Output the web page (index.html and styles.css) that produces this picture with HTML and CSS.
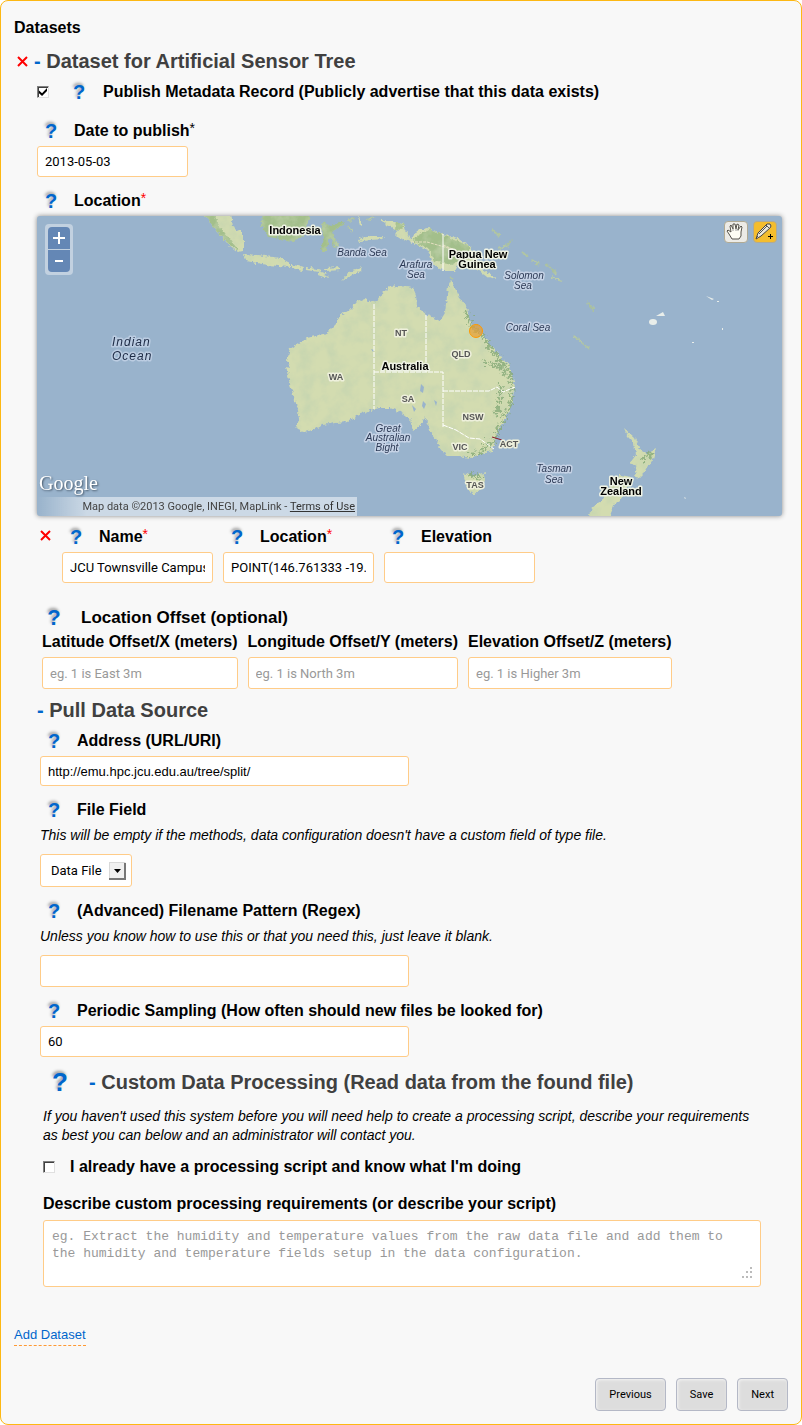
FILE: index.html
```html
<!DOCTYPE html>
<html lang="en">
<head>
<meta charset="utf-8">
<meta name="viewport" content="width=device-width, initial-scale=1">
<title>Datasets</title>
<link rel="stylesheet" href="styles.css">
</head>
<body>
<form class="panel">
  <h1 class="page-title">Datasets</h1>

  <section class="dataset">
    <div class="heading">
      <button type="button" class="remove" aria-label="Remove dataset"><svg viewBox="0 0 11 11"><path d="M1 1L10 10M10 1L1 10"/></svg></button>
      <h2><a href="#" class="toggle">-</a> Dataset for Artificial Sensor Tree</h2>
    </div>

    <div class="dataset-body">
      <div class="publish-row">
        <input type="checkbox" class="check" id="publish" checked>
        <button type="button" class="help">?</button>
        <label for="publish">Publish Metadata Record (Publicly advertise that this data exists)</label>
      </div>

      <div class="field date-field">
        <div class="label-row"><button type="button" class="help">?</button><label for="date">Date to publish<sup>*</sup></label></div>
        <input type="text" class="box short" id="date" value="2013-05-03">
      </div>

      <div class="field map-field">
        <div class="label-row"><button type="button" class="help">?</button><span class="label">Location<sup class="required">*</sup></span></div>
        <div class="map">
          <svg class="map-canvas" viewBox="37 216 745 300" preserveAspectRatio="xMidYMid slice" role="img" aria-label="Map of Australia">
            <defs>
              <filter id="terrain" x="37" y="206" width="745" height="320" filterUnits="userSpaceOnUse">
                <feTurbulence type="fractalNoise" baseFrequency="0.28" numOctaves="3" seed="4" result="fine"/>
                <feDisplacementMap in="SourceGraphic" in2="fine" scale="5" xChannelSelector="R" yChannelSelector="G" result="coast"/>
                <feTurbulence type="fractalNoise" baseFrequency="0.07" numOctaves="4" seed="9"/>
                <feColorMatrix values="0 0 0 0 .55  0 0 0 0 .66  0 0 0 0 .43  1.8 0 0 0 -.72"/>
                <feComposite in2="coast" operator="in" result="mottle"/>
                <feMerge><feMergeNode in="coast"/><feMergeNode in="mottle"/></feMerge>
              </filter>
              <filter id="forest" x="37" y="206" width="745" height="320" filterUnits="userSpaceOnUse">
                <feTurbulence type="fractalNoise" baseFrequency="0.3" numOctaves="3" seed="2" result="n"/>
                <feDisplacementMap in="SourceGraphic" in2="n" scale="12" xChannelSelector="R" yChannelSelector="G"/>
              </filter>
            </defs>
            <g class="land" filter="url(#terrain)">
              <path d="M451 281L457 290L461 301L465 303L468 312L470 322L474 330L483 335L489 344L497 352L502 360L508 364L513 377L515 387L513 395L510 410L503 422L497 432L494 445L492 451L478 455L470 458L460 456L450 456L441 451L438 442L431 434L428 423L425 417L421 424L413 431L410 420L405 415L398 411L390 408L380 408L370 410L358 415L347 422L335 423L322 425L313 430L303 432L296 427L299 420L298 410L295 400L290 385L288 375L286 367L291 368L287 360L290 349L307 338L327 333L337 323L340 315L350 310L357 302L365 299L373 303L378 300L383 292L390 287L398 286L413 288L416 295L417 307L427 315L440 321L445 313L447 297L448 287Z"/>
              <path d="M463 473Q475 478 485 473L483 484L475 495L468 490Z"/>
              <path d="M624 428L635 438L640 450L647 454L656 449L653 459L645 472L638 479L635 475L637 468L630 463L636 455L634 443L628 437Z"/>
              <path d="M620 475L632 477L623 497L615 503L609 518H588L592 508L602 500L613 480Z"/>
              <path d="M203 212H231L233 227L243 233V251L238 252L229 245L217 232Z"/>
              <path d="M243 254L257 255L280 258L290 263V267L267 265L247 261Z"/>
              <path d="M292 265L304 267L302 271L292 268ZM306 267L322 270L320 272L306 270ZM325 268L341 267L340 270L326 271ZM318 272L329 276L327 278L318 275ZM341 281L350 272L363 267L361 271L352 275Z"/>
              <path d="M380 219L393 222L403 223L405 230L411 239L417 231L428 228L443 234L460 240L470 246L474 260L482 269L497 279L487 277L477 269L460 262L455 271L443 271L432 264L428 250L413 243L399 238L395 234L398 230L386 225Z"/>
              <path d="M359 239L370 236L384 236L383 239L370 240L360 242ZM358 216L363 224L360 226Z"/>
            </g>
            <g class="jungle" filter="url(#terrain)">
              <path d="M261 212H311L303 237L293 241L268 237L262 226Z"/>
              <path d="M322 222L331 226L343 221L344 224L332 231L334 236L339 246L335 248L330 237L326 251L321 251L323 236Z"/>
              <path d="M203 212L217 232L230 245L240 252L232 242L221 228L212 212Z"/>
              <path d="M396 222L404 224L402 230L395 229ZM413 238L430 229L443 235L469 246L470 258L458 262L452 265L434 261L429 249L414 242Z"/>
            </g>
            <g class="islands" filter="url(#terrain)">
              <path d="M498 249L507 246L512 240M522 252L528 257M532 260L539 265M546 264L557 274M551 277L562 281M588 302L594 311M574 336L590 349M492 230L500 236M450 277L453 279M348 221L354 218M349 227L352 232M367 220L374 217"/>
            </g>
            <g class="forest" filter="url(#forest)">
              <path d="M466 311L471 325L482 335L491 349L506 366L512 383L510 405L501 423L493 445M484 362L498 366L506 376M501 385L499 407L494 417M470 454L482 452L490 441M470 475L481 478"/>
              <path d="M652 453L642 461"/>
            </g>
            <path class="ridge" d="M411 242L427 242L441 246L455 250M443 245L460 252"/>
            <g class="lakes">
              <path d="M421 384L424 387L423 393L420 391ZM412 405L416 409L414 412ZM423 401L426 404L424 409L422 406ZM434 400L437 402L436 406ZM371 349L374 350L373 352Z"/>
            </g>
            <g class="reefs">
              <ellipse cx="653" cy="322" rx="4" ry="3"/><path d="M656 316L663 312L665 316ZM706 296L714 299L712 300ZM717 301H719V302H717ZM692 342H694V343H692ZM722 328H723V330H722ZM684 497L686 498L685 499Z"/>
            </g>
            <path class="borders" d="M374 304V409M426 315V372M374 372H443V427M443 391H489L497 387L503 392L515 387M443 425L456 430L469 438L480 439L494 449"/>
            <path class="nation-border" d="M443 234V271"/>
            <path class="callout" d="M492 437L502 440"/>
            <circle class="marker" cx="476" cy="331" r="6.5"/>
            <g class="country">
              <text x="295" y="234">Indonesia</text>
              <text x="478" y="258">Papua New</text><text x="477" y="268">Guinea</text>
              <text x="405" y="370">Australia</text>
              <text x="621" y="485">New</text><text x="621" y="495">Zealand</text>
            </g>
            <g class="sea">
              <text x="362" y="256">Banda Sea</text>
              <text x="416" y="268">Arafura</text><text x="416" y="278">Sea</text>
              <text x="524" y="279">Solomon</text><text x="523" y="289">Sea</text>
              <text x="528" y="331">Coral Sea</text>
              <text x="388" y="432">Great</text><text x="388" y="441">Australian</text><text x="387" y="451">Bight</text>
              <text x="554" y="472">Tasman</text><text x="554" y="483">Sea</text>
            </g>
            <g class="ocean"><text x="112" y="346">Indian</text><text x="112" y="360">Ocean</text></g>
            <g class="state">
              <text x="401" y="336">NT</text><text x="461" y="357">QLD</text><text x="336" y="380">WA</text><text x="408" y="402">SA</text><text x="473" y="420">NSW</text><text x="460" y="450">VIC</text><text x="509" y="447">ACT</text><text x="475" y="488">TAS</text>
            </g>
          </svg>
          <div class="zoom"><button type="button" aria-label="Zoom in"><svg viewBox="0 0 22 22"><path d="M5 11H17M11 5V17"/></svg></button><button type="button" aria-label="Zoom out"><svg viewBox="0 0 22 22"><path d="M7 11H15"/></svg></button></div>
          <div class="tools">
            <button type="button" aria-label="Pan"><svg viewBox="0 0 20 18"><path class="hand" d="M6 16L3 11L1 8L2 7L5 9L4 3L5 2L7 6L7 1L9 1L10 6L11 1L13 2L12 7L15 3L16 4L15 9L15 13L13 16Z"/><path class="hand-line" d="M7 5V8M10 5V8M12 6V8"/></svg></button>
            <button type="button" class="active" aria-label="Draw point"><svg viewBox="0 0 20 18"><path class="pencil" d="M1 16L3 10L12 1L15 1L16 3L15 5L6 13Z"/><path class="pencil-line" d="M4 11L12 3M11 2L15 6M2 13L4 15"/><path class="plus" d="M13 13.500H18M15.500 11V16"/></svg></button>
          </div>
          <div class="attribution">
            <span class="logo">Google</span>
            <p>Map data ©2013 Google, INEGI, MapLink - <a href="#">Terms of Use</a></p>
          </div>
        </div>
      </div>

      <div class="point">
        <button type="button" class="remove" aria-label="Remove point"><svg viewBox="0 0 11 11"><path d="M1 1L10 10M10 1L1 10"/></svg></button>
        <div class="field"><div class="label-row"><button type="button" class="help">?</button><label for="name">Name<sup class="required">*</sup></label></div><input type="text" class="box short" id="name" value="JCU Townsville Campus"></div>
        <div class="field"><div class="label-row"><button type="button" class="help">?</button><label for="point">Location<sup class="required">*</sup></label></div><input type="text" class="box short" id="point" value="POINT(146.761333 -19.32)"></div>
        <div class="field"><div class="label-row"><button type="button" class="help">?</button><label for="elevation">Elevation</label></div><input type="text" class="box short" id="elevation"></div>
      </div>

      <div class="offsets">
        <h3 class="label-row"><button type="button" class="help medium">?</button>Location Offset (optional)</h3>
        <div class="offset-fields">
          <div class="field"><label for="lat">Latitude Offset/X (meters)</label><input type="text" class="box tall" id="lat" size="1" placeholder="eg. 1 is East 3m"></div>
          <div class="field"><label for="lon">Longitude Offset/Y (meters)</label><input type="text" class="box tall" id="lon" size="1" placeholder="eg. 1 is North 3m"></div>
          <div class="field"><label for="ele">Elevation Offset/Z (meters)</label><input type="text" class="box tall" id="ele" size="1" placeholder="eg. 1 is Higher 3m"></div>
        </div>
      </div>

      <section class="source">
        <h2><a href="#" class="toggle">-</a> Pull Data Source</h2>
        <div class="source-body">
          <div class="field address">
            <div class="label-row"><button type="button" class="help">?</button><label for="address">Address (URL/URI)</label></div>
            <input type="text" class="box long url" id="address" value="http://emu.hpc.jcu.edu.au/tree/split/">
          </div>
          <div class="field">
            <div class="label-row"><button type="button" class="help">?</button><label for="file">File Field</label></div>
            <p class="hint">This will be empty if the methods, data configuration doesn't have a custom field of type file.</p>
            <div class="select"><select id="file"><option>Data File</option></select><svg viewBox="0 0 17 18"><path class="face" d="M0 0H17V18H0Z"/><path class="light" d="M0 17V0H16V1H1V17Z"/><path class="shade" d="M15 1H17V18H0V16H15Z"/><path class="arrow" d="M5 7H12L8.500 11Z"/></svg></div>
          </div>
          <div class="field">
            <div class="label-row"><button type="button" class="help">?</button><label for="regex">(Advanced) Filename Pattern (Regex)</label></div>
            <p class="hint">Unless you know how to use this or that you need this, just leave it blank.</p>
            <input type="text" class="box long tall" id="regex">
          </div>
          <div class="field">
            <div class="label-row"><button type="button" class="help">?</button><label for="sampling">Periodic Sampling (How often should new files be looked for)</label></div>
            <input type="text" class="box long" id="sampling" value="60">
          </div>
        </div>

        <section class="processing">
          <h2 class="processing-title"><button type="button" class="help large">?</button><span><a href="#" class="toggle">-</a> Custom Data Processing (Read data from the found file)</span></h2>
          <p class="intro">If you haven't used this system before you will need help to create a processing script, describe your requirements as best you can below and an administrator will contact you.</p>
          <div class="script-row"><input type="checkbox" class="check" id="script"><label for="script">I already have a processing script and know what I'm doing</label></div>
          <div class="describe">
            <label for="describe">Describe custom processing requirements (or describe your script)</label>
            <div class="area"><textarea id="describe" class="box" placeholder="eg. Extract the humidity and temperature values from the raw data file and add them to the humidity and temperature fields setup in the data configuration."></textarea><svg viewBox="0 0 12 12"><path d="M9 0h2v2H9zM5 4h2v2H5zM9 4h2v2H9zM1 9h2v2H1zM5 9h2v2H5zM9 9h2v2H9z"/></svg></div>
          </div>
        </section>
      </section>
    </div>
  </section>

  <div class="add"><a href="#">Add Dataset</a></div>
  <div class="actions">
    <button type="button">Previous</button>
    <button type="submit">Save</button>
    <button type="button">Next</button>
  </div>
</form>
</body>
</html>
```

FILE: styles.css
```css
* { box-sizing: border-box; }
body {
  margin: 0;
  background: #fff;
  color: #000;
  font: bold 16px/24px "Liberation Sans", Arial, sans-serif;
}
h1, h2, h3, p { margin: 0; font-size: 16px; line-height: 24px; }
h2 { font-size: 20px; color: #404040; }
h3 { font-size: 17px; }
button, input, select, textarea { font: inherit; color: inherit; margin: 0; }
button { padding: 0; border: 0; background: none; cursor: pointer; }
svg { display: block; }
a { color: #06c; text-decoration: none; }
sup { font-size: 14px; line-height: 0; font-weight: normal; vertical-align: 3px; }
.required { color: #f00; }

.panel {
  border: 1px solid #fdb813;
  border-radius: 8px;
  background: #f8f8f8;
  padding: 15px 13px 13px;
}
.heading { display: flex; align-items: center; gap: 6px; margin: 9px 0 7px 3px; }
.remove { width: 11px; height: 11px; flex: none; }
.remove svg { width: 11px; height: 11px; stroke: #f00; stroke-width: 2; fill: none; }
.dataset-body { margin: 0 6px 0 23px; }

.help {
  width: 14px;
  color: #06c;
  font-size: 20px;
  line-height: 24px;
  text-align: center;
  text-shadow: -1px -2px 3px #999;
}
.help.medium { font-size: 22px; }
.help.large { font-size: 26px; }
.label-row { display: flex; gap: 16px; padding: 1px 0 0 7px; }
.field { display: flex; flex-direction: column; align-items: flex-start; }
.field > .label-row, .field > label { margin-bottom: 3px; }

.publish-row { display: flex; align-items: center; gap: 17px; }
.publish-row .help { margin-left: 6px; }
.check {
  appearance: none;
  width: 12px;
  height: 12px;
  background: #fff;
  border: 1px solid;
  border-color: #808080 #e0e0e0 #e0e0e0 #808080;
  box-shadow: inset 1px 1px #404040;
}
.check:checked::before {
  content: "";
  display: block;
  width: 8px;
  height: 8px;
  margin: 1px;
  background: #000;
  clip-path: polygon(0 30%, 38% 65%, 100% 0, 100% 38%, 38% 100%, 0 65%);
}
.date-field { margin-top: 14px; }
.map-field { margin-top: 11px; }
.box {
  height: 31px;
  padding: 0 7px;
  border: 1px solid #fc8;
  border-radius: 3px;
  background: #fff;
  font: 13px/19px Roboto, "Liberation Sans", sans-serif;
  outline: none;
}
.short { width: 151px; }
.long { width: 369px; max-width: 100%; }
.tall { height: 32px; }
::placeholder { color: #999; opacity: 1; }
.url { font-family: "Liberation Sans", Arial, sans-serif; }

.map {
  position: relative;
  width: 100%;
  height: 300px;
  border-radius: 3px;
  background: #99b3cc;
  box-shadow: 0 0 5px #888;
  overflow: hidden;
}
.map-canvas { width: 100%; height: 100%; font-family: "Liberation Sans", Arial, sans-serif; }
.land { fill: #d3dcb0; }
.jungle { fill: #a3bf8b; }
.islands path { fill: none; stroke: #a8bfa0; stroke-width: 2; }
.forest path { fill: none; stroke: #86aa78; stroke-width: 4; stroke-dasharray: 5 2; opacity: .8; }
.ridge { fill: none; stroke: #e4dfc0; stroke-width: 1; stroke-dasharray: 3 1; }
.lakes { fill: #99b3cc; }
.reefs { fill: #e9eeea; }
.borders { fill: none; stroke: #fff; stroke-width: 1; stroke-dasharray: 5 1; }
.nation-border { stroke: #fff; }
.callout { stroke: #8b1a2b; }
.marker { fill: #e9a02f; fill-opacity: .7; stroke: #f90; }
.map-canvas text { paint-order: stroke; stroke-linejoin: round; stroke-width: 3px; text-anchor: middle; font-weight: normal; font-size: 10px; }
.map-canvas .country text { font-weight: bold; font-size: 11px; stroke: #eef2e4; }
.map-canvas .sea text { font-style: italic; fill: #2c3a55; stroke: #c6d3e6; }
.map-canvas .ocean text { font-style: italic; font-size: 12px; letter-spacing: 1px; text-anchor: start; fill: #1c2a45; stroke: #bccde2; }
.map-canvas .state text { font-weight: bold; font-size: 9px; fill: #555; stroke: #eef0dc; }

.zoom {
  position: absolute;
  top: 8px;
  left: 8px;
  display: grid;
  gap: 1px;
  padding: 3px;
  border-radius: 4px;
  background: rgba(255, 255, 255, .4);
}
.zoom button { width: 22px; height: 22px; background: #6487b5; border-radius: 4px 4px 0 0; }
.zoom button + button { border-radius: 0 0 4px 4px; }
.zoom svg { stroke: #fff; stroke-width: 2; }
.tools { position: absolute; top: 5px; right: 5px; display: flex; gap: 5px; }
.tools button { width: 24px; height: 22px; border: 1px solid #b0aa94; border-radius: 4px; background: #ecebe6; padding: 1px; }
.tools .active { background: #f4bd2e; }
.hand { fill: #fffef4; stroke: #55524a; stroke-width: 1; }
.hand-line { fill: none; stroke: #888; stroke-width: .8; }
.pencil { fill: #ece8d8; stroke: #444; }
.pencil-line { fill: none; stroke: #555; stroke-width: 1; }
.plus { stroke: #000; stroke-width: 1; }
.attribution { position: absolute; left: 0; bottom: 0; width: 320px; }
.logo { display: block; padding-left: 2px; font: 20px/28px "Liberation Serif", serif; color: #fff; text-shadow: 1px 1px 2px #456; }
.attribution p {
  padding: 0 2px 0 0;
  text-align: right;
  font: 11px/19px Roboto, "Liberation Sans", sans-serif;
  color: #444;
  background: linear-gradient(90deg, rgba(255, 255, 255, 0), rgba(255, 255, 255, .5) 50px);
}
.attribution a { color: #333; text-decoration: underline; }

.point { display: flex; gap: 10px; margin-top: 8px; padding-left: 3px; }
.point .remove { margin: 6px 1px 0 0; }
.offsets { margin-top: 22px; padding-left: 5px; }
.offsets .label-row { padding-left: 5px; gap: 20px; }
.offset-fields { display: flex; gap: 10px; }
.offset-fields .box { width: 100%; }
.source { margin-top: 9px; }
.source-body { display: grid; gap: 11px; margin: 6px 0 0 3px; }
.address .box { height: 30px; }
.hint, .intro { font-size: 14px; line-height: 20px; font-weight: normal; font-style: italic; }
.hint { margin: 0 0 9px; }
.select { display: grid; align-items: center; }
.select select {
  grid-area: 1 / 1;
  appearance: none;
  width: 92px;
  height: 33px;
  padding: 0 10px;
  border: 1px solid #fc8;
  border-radius: 3px;
  background: #fff;
  font: 13px/19px Roboto, "Liberation Sans", sans-serif;
}
.select svg { grid-area: 1 / 1; justify-self: end; width: 17px; height: 18px; margin-right: 6px; pointer-events: none; }
.face { fill: #f0f0f0; }
.light { fill: #d8d8d8; }
.shade { fill: #777; }
.arrow { fill: #000; }
.processing { margin: 13px 21px 0 6px; }
.processing-title { display: flex; gap: 23px; padding-left: 9px; }
.intro { line-height: 19px; margin: 13px 0 10px; }
.script-row { display: flex; align-items: center; gap: 15px; }
.describe { display: grid; gap: 4px; margin-top: 13px; }
.area { display: grid; }
.area textarea { grid-area: 1 / 1; height: 67px; padding: 7px 8px; resize: none; font: 13px/17px "Liberation Mono", monospace; }
.area svg { grid-area: 1 / 1; place-self: end; width: 12px; height: 12px; margin: 0 8px 8px 0; fill: #bbb; }
.add { margin-top: 38px; font: 13px/20px "Liberation Sans", Arial, sans-serif; }
.add a { display: inline-block; border-bottom: 1px dashed #f93; }
.actions { display: flex; justify-content: flex-end; gap: 10px; margin-top: 32px; }
.actions button {
  height: 33px;
  padding: 0 13px;
  border: 1px solid #b4b8c6;
  border-radius: 4px;
  background: #ddd;
  box-shadow: inset 1px 1px 3px #f4f4f4;
  font: 11px/20px Roboto, "Liberation Sans", sans-serif;
}
```
